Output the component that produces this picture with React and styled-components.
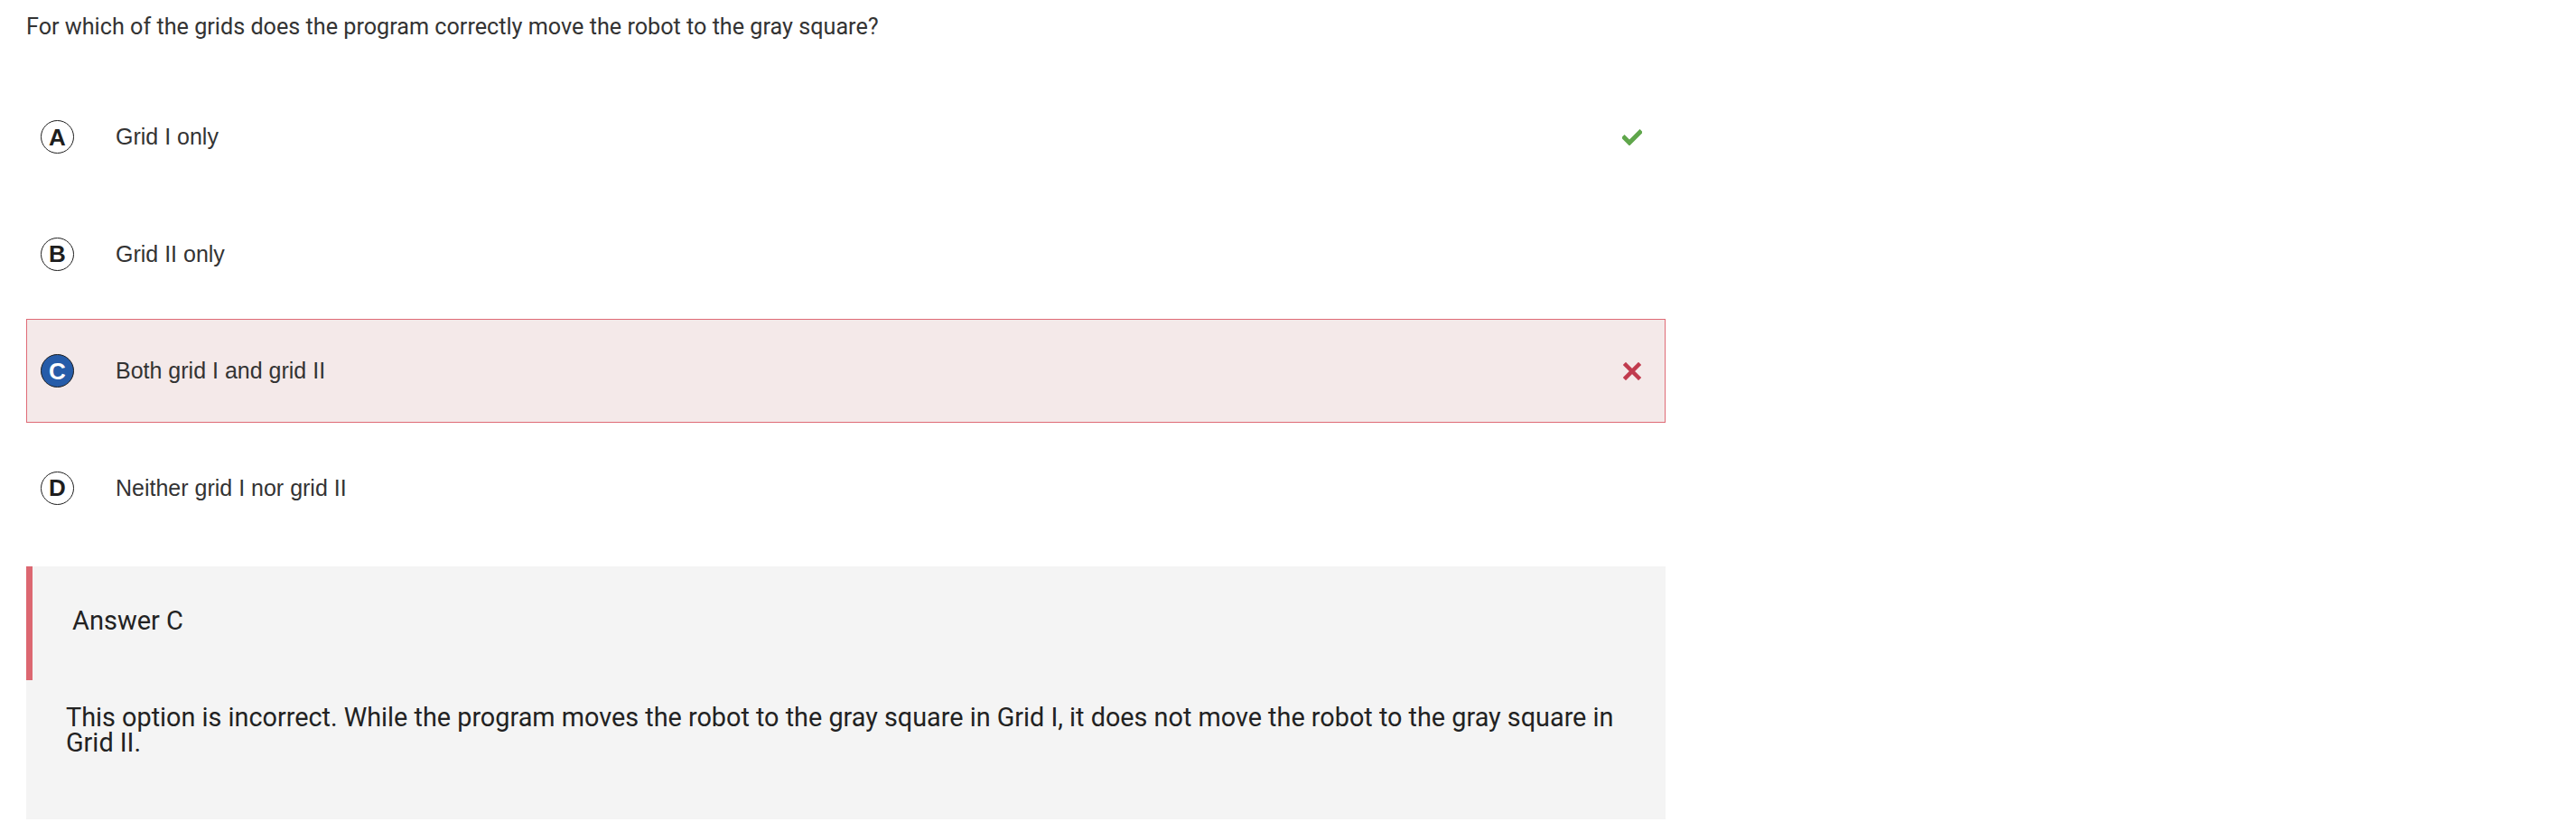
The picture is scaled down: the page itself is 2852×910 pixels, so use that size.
import React from "react";
import styled, { createGlobalStyle } from "styled-components";

const GlobalStyle = createGlobalStyle`
  html, body {
    margin: 0;
    padding: 0;
    background: #ffffff;
  }
`;

const Page = styled.div`
  width: 1815px;
  padding: 15px 0 0 29px;
`;

const Question = styled.p`
  margin: 0 0 50px 0;
  font-family: Roboto, "Liberation Sans", sans-serif;
  font-size: 25.2px;
  line-height: 29px;
  color: #333333;
`;

const OptionList = styled.div`
  display: flex;
  flex-direction: column;
  gap: 14.5px;
`;

const Option = styled.div`
  box-sizing: border-box;
  height: 115px;
  display: flex;
  align-items: center;
  padding: 0 25px 0 15px;
  border: 1px solid ${(props) => (props.$wrong ? "#df6b76" : "transparent")};
  background: ${(props) => (props.$wrong ? "#f4e9e9" : "transparent")};
`;

const Letter = styled.span`
  box-sizing: border-box;
  flex: 0 0 auto;
  width: 37px;
  height: 37px;
  border-radius: 50%;
  border: 1px solid #1e1e1e;
  display: flex;
  align-items: center;
  justify-content: center;
  font-family: "Liberation Sans", Arial, sans-serif;
  font-weight: bold;
  font-size: 26px;
  line-height: 1;
  color: ${(props) => (props.$selected ? "#ffffff" : "#1e1e1e")};
  background: ${(props) => (props.$selected ? "#265ca9" : "transparent")};
`;

const OptionText = styled.span`
  flex: 1 1 auto;
  margin-left: 46px;
  font-family: "Liberation Sans", Arial, sans-serif;
  font-size: 25px;
  color: #333333;
`;

const Mark = styled.span`
  flex: 0 0 auto;
  width: 22px;
  display: flex;
  justify-content: center;
  svg {
    display: block;
  }
`;

const AnswerBox = styled.div`
  margin-top: 29px;
  background: #f4f4f4;
  padding-bottom: 71px;
`;

const AnswerHeader = styled.div`
  box-sizing: border-box;
  height: 126px;
  display: flex;
  align-items: center;
  border-left: 7px solid #dc6771;
  padding: 0 0 6px 44px;
  font-family: Roboto, "Liberation Sans", sans-serif;
  font-size: 29px;
  color: #222222;
`;

const AnswerBody = styled.p`
  margin: 27px 30px 0 44px;
  font-family: Roboto, "Liberation Sans", sans-serif;
  font-size: 28.8px;
  line-height: 28px;
  color: #222222;
`;

function Check() {
  return (
    <svg width="22" height="18" viewBox="0 0 22 18">
      <polyline
        points="2.5,9.5 8,15 19.5,3.5"
        fill="none"
        stroke="#5fa64b"
        strokeWidth="5"
        strokeLinecap="square"
      />
    </svg>
  );
}

function Cross() {
  return (
    <svg width="20" height="20" viewBox="0 0 20 20">
      <path
        d="M3 3 L17 17 M17 3 L3 17"
        fill="none"
        stroke="#c13b4e"
        strokeWidth="4.5"
        strokeLinecap="square"
      />
    </svg>
  );
}

const options = [
  { letter: "A", text: "Grid I only", mark: "correct" },
  { letter: "B", text: "Grid II only" },
  { letter: "C", text: "Both grid I and grid II", selected: true, mark: "wrong" },
  { letter: "D", text: "Neither grid I nor grid II" },
];

export default function App() {
  return (
    <>
      <GlobalStyle />
      <Page>
        <Question>
          For which of the grids does the program correctly move the robot to the gray square?
        </Question>
        <OptionList>
          {options.map((option) => (
            <Option key={option.letter} $wrong={option.mark === "wrong"}>
              <Letter $selected={option.selected}>{option.letter}</Letter>
              <OptionText>{option.text}</OptionText>
              <Mark>
                {option.mark === "correct" ? <Check /> : ""}
                {option.mark === "wrong" ? <Cross /> : ""}
              </Mark>
            </Option>
          ))}
        </OptionList>
        <AnswerBox>
          <AnswerHeader>Answer C</AnswerHeader>
          <AnswerBody>
            This option is incorrect. While the program moves the robot to the gray square in
            Grid I, it does not move the robot to the gray square in Grid II.
          </AnswerBody>
        </AnswerBox>
      </Page>
    </>
  );
}
